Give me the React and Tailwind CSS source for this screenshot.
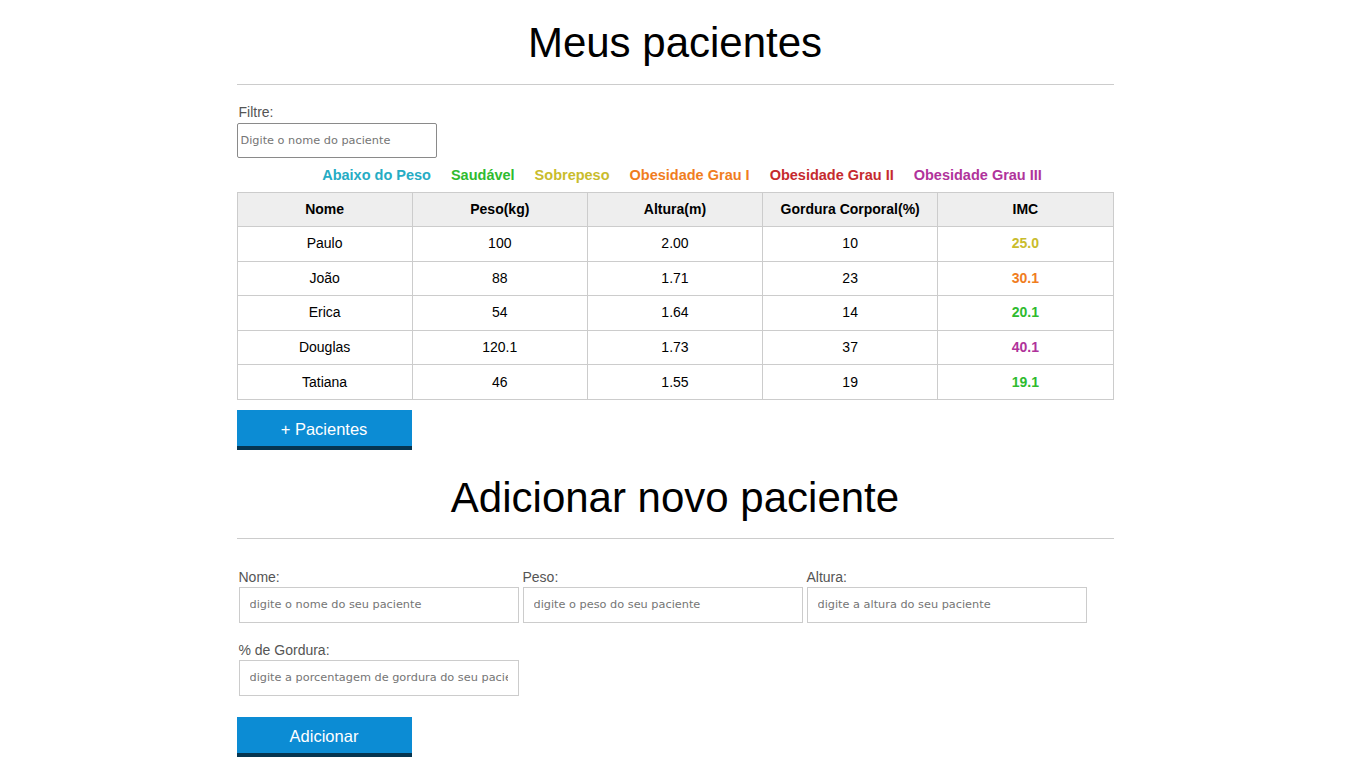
import React from 'react';

const pacientes = [
    { nome: 'Paulo', peso: '100', altura: '2.00', gordura: '10', imc: '25.0', cor: 'text-[#c9bc2c]' },
    { nome: 'João', peso: '88', altura: '1.71', gordura: '23', imc: '30.1', cor: 'text-[#f07d1e]' },
    { nome: 'Erica', peso: '54', altura: '1.64', gordura: '14', imc: '20.1', cor: 'text-[#2fbb2f]' },
    { nome: 'Douglas', peso: '120.1', altura: '1.73', gordura: '37', imc: '40.1', cor: 'text-[#b0339b]' },
    { nome: 'Tatiana', peso: '46', altura: '1.55', gordura: '19', imc: '19.1', cor: 'text-[#2fbb2f]' },
];

const legenda = [
    { label: 'Abaixo do Peso', cor: 'text-[#26acc4]' },
    { label: 'Saudável', cor: 'text-[#2fbb2f]' },
    { label: 'Sobrepeso', cor: 'text-[#c9bc2c]' },
    { label: 'Obesidade Grau I', cor: 'text-[#f07d1e]' },
    { label: 'Obesidade Grau II', cor: 'text-[#c52a2e]' },
    { label: 'Obesidade Grau III', cor: 'text-[#b0339b]' },
];

const campos = [
    { label: 'Nome:', placeholder: 'digite o nome do seu paciente' },
    { label: 'Peso:', placeholder: 'digite o peso do seu paciente' },
    { label: 'Altura:', placeholder: 'digite a altura do seu paciente' },
    { label: '% de Gordura:', placeholder: 'digite a porcentagem de gordura do seu paciente' },
];

export default function App() {
    return (
        <div className="min-h-screen bg-white font-['Liberation_Sans',Arial,sans-serif] text-black">
            <div className="w-[877px] mx-auto">
                {/* Meus pacientes */}
                <h1 className="text-[42px] leading-[48px] text-center pt-[19px]">Meus pacientes</h1>
                <hr className="mt-[17px] border-t border-[#cccccc]" />

                <div className="mt-[19px] pl-[2px] text-[14px] leading-[16px] text-[#555]">Filtre:</div>
                <input
                    type="text"
                    placeholder="Digite o nome do paciente"
                    className="mt-[3px] w-[200px] h-[35px] border border-[#8a8a8a] rounded-[2px] px-[3px] text-[11.3px] font-['DejaVu_Sans',Verdana,sans-serif] placeholder:text-[#757575] outline-none"
                />

                <div className="flex justify-center gap-[20px] pl-[14px] mt-[9px] text-[14.5px] leading-[16px] font-bold">
                    {legenda.map((l) => (
                        <span key={l.label} className={l.cor}>{l.label}</span>
                    ))}
                </div>

                {/* Tabela */}
                <table className="w-full mt-[9px] border-collapse table-fixed text-[14px]">
                    <thead className="bg-[#eeeeee]">
                        <tr>
                            {['Nome', 'Peso(kg)', 'Altura(m)', 'Gordura Corporal(%)', 'IMC'].map((h) => (
                                <th key={h} className="h-[34px] border border-[#cccccc] font-bold text-[14px]">{h}</th>
                            ))}
                        </tr>
                    </thead>
                    <tbody>
                        {pacientes.map((p) => (
                            <tr key={p.nome}>
                                <td className="h-[34.6px] border border-[#cccccc] text-center">{p.nome}</td>
                                <td className="h-[34.6px] border border-[#cccccc] text-center">{p.peso}</td>
                                <td className="h-[34.6px] border border-[#cccccc] text-center">{p.altura}</td>
                                <td className="h-[34.6px] border border-[#cccccc] text-center">{p.gordura}</td>
                                <td className={`h-[34.6px] border border-[#cccccc] text-center font-bold ${p.cor}`}>{p.imc}</td>
                            </tr>
                        ))}
                    </tbody>
                </table>

                <button className="mt-[10px] w-[175px] h-[40px] pt-[3px] bg-[#0c8cd4] border-b-[4px] border-[#063550] text-white text-[16.5px]">
                    + Pacientes
                </button>

                {/* Adicionar */}
                <h2 className="text-[42px] leading-[48px] text-center mt-[24px]">Adicionar novo paciente</h2>
                <hr className="mt-[16px] border-t border-[#cccccc]" />

                <form className="mt-[30px] pl-[2px]" onSubmit={(e) => e.preventDefault()}>
                    <div className="flex flex-wrap gap-x-[4px] gap-y-[19px] w-[860px]">
                        {campos.map((c) => (
                            <div key={c.label} className="flex flex-col w-[280px]">
                                <label className="text-[14px] leading-[16px] text-[#555]">{c.label}</label>
                                <input
                                    type="text"
                                    placeholder={c.placeholder}
                                    className="mt-[2px] h-[36px] border border-[#cccccc] px-[10px] text-[11.3px] font-['DejaVu_Sans',Verdana,sans-serif] placeholder:text-[#757575] outline-none"
                                />
                            </div>
                        ))}
                    </div>
                    <button className="-ml-[2px] mt-[21px] w-[175px] h-[40px] pt-[2px] bg-[#0c8cd4] border-b-[4px] border-[#063550] text-white text-[16.5px]">
                        Adicionar
                    </button>
                </form>
            </div>
        </div>
    );
}
